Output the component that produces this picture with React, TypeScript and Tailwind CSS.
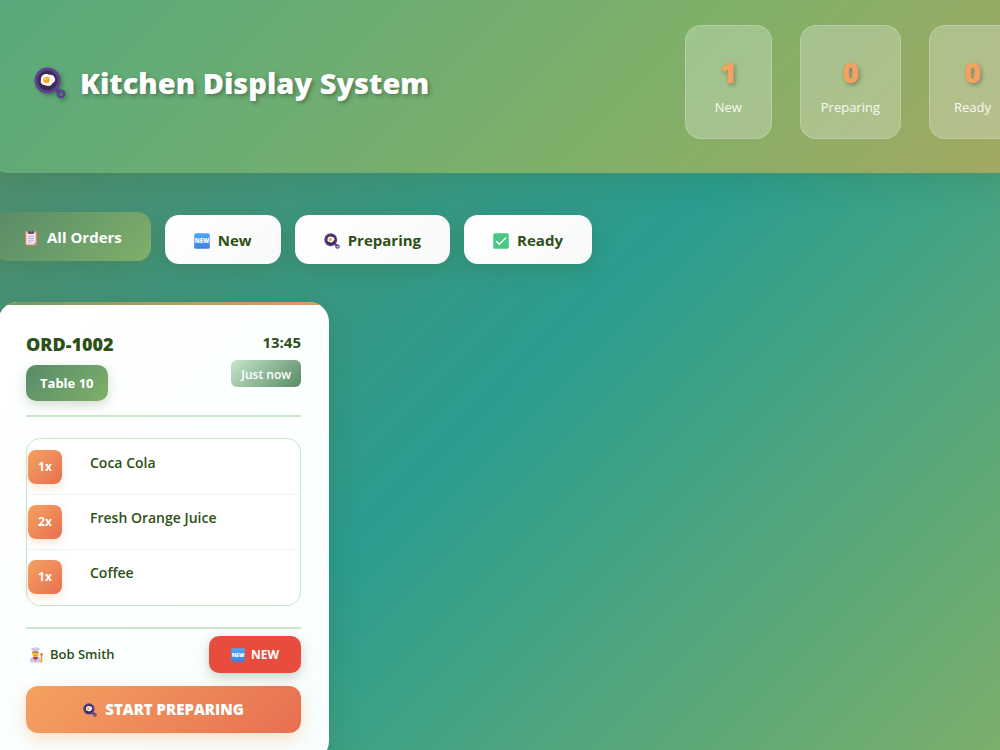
import { useState } from "react";
import type { ReactNode } from "react";

type IconProps = { className?: string };

type Status = "new" | "preparing" | "ready";
type Filter = "all" | Status;

type Order = {
  id: string;
  table: string;
  time: string;
  age: string;
  customer: string;
  items: { qty: number; name: string }[];
};

function PanIcon({ className }: IconProps) {
  return (
    <svg viewBox="0 0 32 32" className={className} aria-hidden="true">
      <path d="M21 21l4 4" stroke="#5b4190" strokeWidth="4.500" strokeLinecap="round" />
      <circle cx="27" cy="27" r="3.200" fill="none" stroke="#5b4190" strokeWidth="2.600" />
      <circle cx="13.500" cy="13.500" r="13" fill="#5b4190" />
      <circle cx="13.500" cy="13.500" r="10" fill="#3c2b52" />
      <path
        d="M8 9c2-3 6-2 7-1.500s4 0 5 2c.5 1.500 1.500 2 1 4s-2.500 2-3 3.500c-1 2-4 2.500-6 1.500s-4-.5-5-2.500c-.8-2 .2-2.500 0-4S7.500 10 8 9z"
        fill="#fff6fa"
      />
      <circle cx="12.500" cy="13" r="3.200" fill="#f9a72b" />
      <circle cx="11.800" cy="12" r="1.200" fill="#ffc95c" />
    </svg>
  );
}

function ClipboardIcon({ className }: IconProps) {
  return (
    <svg viewBox="0 0 32 32" className={className} aria-hidden="true">
      <rect x="4" y="2" width="24" height="29" rx="2" fill="#d9825c" />
      <path d="M6.500 5h19v20l-4 4h-15z" fill="#f1e9f7" />
      <path d="M25.500 25l-4 4v-4z" fill="#b9a6cc" />
      <rect x="10" y="2" width="12" height="6" rx="1.500" fill="#5d5068" />
      <path d="M13 3a3 3 0 0 1 6 0z" fill="#8d7f99" />
      <path d="M10 12.500h12M10 16.500h12M10 20.500h12M10 24.500h7" stroke="#a79bb8" strokeWidth="1.500" />
    </svg>
  );
}

function NewIcon({ className }: IconProps) {
  return (
    <svg viewBox="0 0 32 32" className={className} aria-hidden="true">
      <defs>
        <linearGradient id="new-tile" x1="0" y1="0" x2="0" y2="1">
          <stop offset="0" stopColor="#4ba9fb" />
          <stop offset="1" stopColor="#3c82e0" />
        </linearGradient>
      </defs>
      <rect x="0.500" y="0.500" width="31" height="31" rx="3" fill="url(#new-tile)" />
      <text x="16" y="20" textAnchor="middle" fontSize="12" fontWeight="800" fill="#fff">
        NEW
      </text>
    </svg>
  );
}

function CheckIcon({ className }: IconProps) {
  return (
    <svg viewBox="0 0 32 32" className={className} aria-hidden="true">
      <rect x="0.500" y="0.500" width="31" height="31" rx="3" fill="#45c882" />
      <path d="M7 17l5.500 5.500L25.500 10" fill="none" stroke="#fff" strokeWidth="3.200" strokeLinecap="round" strokeLinejoin="round" />
    </svg>
  );
}

function CookIcon({ className }: IconProps) {
  return (
    <svg viewBox="0 0 32 32" className={className} aria-hidden="true">
      <path d="M4 31v-5c0-4 3-6 7-6h8c4 0 7 2 7 6v5z" fill="#d3c6e2" />
      <path d="M10 20h10l-2 5h-6z" fill="#c4265e" />
      <circle cx="15" cy="14" r="6.500" fill="#fbc02e" />
      <path d="M8 13c0-3 3-5 7-5s7 2 7 5l-2-2H10z" fill="#8a4a3d" />
      <path d="M8 9V6C5 5 6 1 10 2c2-2 8-2 10 0 4-1 5 3 2 4v3z" fill="#d3c6e2" />
      <path d="M12.500 16.500c1.500 1.500 3.500 1.500 5 0" stroke="#8a4a3d" fill="none" strokeWidth="1.200" />
      <circle cx="15" cy="28" r="1" fill="#8a7b9c" />
      <path d="M27 15v15" stroke="#d9825c" strokeWidth="2.500" strokeLinecap="round" />
      <ellipse cx="27" cy="15" rx="2.500" ry="3.500" fill="#d9825c" />
      <circle cx="26.500" cy="26" r="3" fill="#fbc02e" />
    </svg>
  );
}

const stats = [
  { label: "New", value: 1 },
  { label: "Preparing", value: 0 },
  { label: "Ready", value: 0 },
];

const filters: { key: Filter; label: string; icon: ReactNode }[] = [
  { key: "all", label: "All Orders", icon: <ClipboardIcon className="size-4" /> },
  { key: "new", label: "New", icon: <NewIcon className="size-4" /> },
  { key: "preparing", label: "Preparing", icon: <PanIcon className="size-4" /> },
  { key: "ready", label: "Ready", icon: <CheckIcon className="size-4" /> },
];

const order: Order = {
  id: "ORD-1002",
  table: "Table 10",
  time: "13:45",
  age: "Just now",
  customer: "Bob Smith",
  items: [
    { qty: 1, name: "Coca Cola" },
    { qty: 2, name: "Fresh Orange Juice" },
    { qty: 1, name: "Coffee" },
  ],
};

function Header() {
  return (
    <header className="-ml-2 -mr-12 flex items-center justify-between rounded-b-2xl bg-[linear-gradient(135deg,#58a97c_0px,#7fb069_520px,#a1a963_827px)] pt-[25px] pr-8 pb-[34px] pl-[42px] shadow-[0_8px_32px_rgba(45,80,22,0.15)]">
      <h1 className="flex items-center gap-3.5 pt-0.5 text-[29px] font-extrabold text-white [text-shadow:2px_2px_4px_rgba(0,0,0,0.3)]">
        <PanIcon className="size-8 drop-shadow-[2px_2px_2px_rgba(0,0,0,0.3)]" />
        Kitchen Display System
      </h1>
      <div className="flex gap-7">
        {stats.map((s) => (
          <div
            key={s.label}
            className="flex h-[114px] min-w-[87px] flex-col items-center justify-center rounded-2xl border border-white/20 bg-white/25 px-5"
          >
            <span className="pt-2.5 text-[29px] leading-10 font-extrabold text-[#f4a261] [text-shadow:2px_2px_4px_rgba(0,0,0,0.3)]">
              {s.value}
            </span>
            <span className="text-[13px] leading-[30px] text-white/90">{s.label}</span>
          </div>
        ))}
      </div>
    </header>
  );
}

function OrderCard({ order, onStart }: { order: Order; onStart: () => void }) {
  return (
    <article className="relative -ml-0.5 w-[331px] overflow-hidden rounded-[20px] bg-linear-135 from-white to-[#f8fffe] px-7 pt-8 pb-7 shadow-[0_8px_32px_rgba(45,80,22,0.2)]">
      <div className="absolute inset-x-0 top-0 h-[3px] bg-linear-to-r from-[#6a9a64] to-[#e89a5c]" />

      <div className="flex items-start justify-between border-b-2 border-[#c8e6c9] pb-3.5">
        <div>
          <h2 className="text-[18px] leading-5 font-extrabold">{order.id}</h2>
          <span className="mt-[11px] flex h-9 w-fit items-center rounded-[10px] bg-linear-135 from-[#588b68] to-[#7fb069] px-3.5 pt-0.5 text-[13px] font-bold text-white shadow-[0_4px_12px_rgba(45,80,22,0.2)]">
            {order.table}
          </span>
        </div>
        <div className="flex flex-col items-end">
          <time className="text-[15px] leading-4 font-bold">{order.time}</time>
          <span className="mt-2.5 flex h-[27px] items-center rounded-md bg-linear-135 from-[#c8e6c9] to-[#588b68] px-2.5 pt-0.5 text-[12px] font-semibold text-white">
            {order.age}
          </span>
        </div>
      </div>

      <ul className="my-[21px] rounded-[14px] border border-[#c8e6c9] bg-white p-px">
        {order.items.map((item) => (
          <li key={item.name} className="flex gap-7 border-b border-[#eaf6f3] py-2.5 last:border-b-0">
            <span className="flex size-[34px] items-center justify-center rounded-lg bg-linear-135 from-[#f4a261] to-[#e76f51] text-[12px] font-bold text-white shadow-[0_3px_8px_rgba(244,162,97,0.3)]">
              {item.qty}x
            </span>
            <span className="text-[14px] leading-[26px] font-semibold">{item.name}</span>
          </li>
        ))}
      </ul>

      <div className="flex items-center justify-between border-t-2 border-[#c8e6c9] pt-[7px]">
        <span className="flex items-center gap-1.5 pl-0.5 text-[13px] font-semibold">
          <CookIcon className="size-4" />
          {order.customer}
        </span>
        <span className="flex h-[37px] items-center gap-1.5 rounded-[10px] bg-[#e74c3c] px-[22px] text-[12px] font-bold text-white shadow-[0_4px_12px_rgba(45,80,22,0.25)]">
          <NewIcon className="size-3.5" />
          NEW
        </span>
      </div>

      <button
        type="button"
        onClick={onStart}
        className="mt-[13px] flex h-[47px] w-full items-center justify-center gap-2 rounded-xl bg-linear-135 from-[#f4a261] to-[#e76f51] text-[15px] font-extrabold text-white shadow-[0_6px_18px_rgba(244,162,97,0.35)]"
      >
        <PanIcon className="size-3.5" />
        START PREPARING
      </button>
    </article>
  );
}

export default function App() {
  const [filter, setFilter] = useState<Filter>("all");
  const [status, setStatus] = useState<Status>("new");

  return (
    <div className="min-h-screen overflow-x-hidden bg-[linear-gradient(135deg,#588b68_0%,#2a9d8f_50%,#7fb069_100%)] pb-8 font-['Open_Sans','Noto_Sans',sans-serif] text-[#2d5016]">
      <Header />

      <nav className="mt-[42px] -ml-1.5 flex gap-3.5">
        {filters.map((f) => (
          <button
            key={f.key}
            type="button"
            aria-pressed={filter === f.key}
            onClick={() => setFilter(f.key)}
            className={
              filter === f.key
                ? "flex h-[49px] -translate-y-[3px] items-center gap-2 rounded-[14px] bg-linear-135 from-[#588b68] to-[#7fb069] px-[29px] pt-0.5 text-[15px] font-bold text-white shadow-[0_8px_24px_rgba(45,80,22,0.15)]"
                : "flex h-[49px] items-center gap-2 rounded-[14px] bg-linear-135 from-white to-[#f8f9fa] px-[29px] pt-0.5 text-[15px] font-bold shadow-[0_6px_20px_rgba(45,80,22,0.2)]"
            }
          >
            {f.icon}
            {f.label}
          </button>
        ))}
      </nav>

      <main className="mt-[38px]">
        {(filter === "all" || filter === status) && (
          <OrderCard order={order} onStart={() => setStatus("preparing")} />
        )}
      </main>
    </div>
  );
}
